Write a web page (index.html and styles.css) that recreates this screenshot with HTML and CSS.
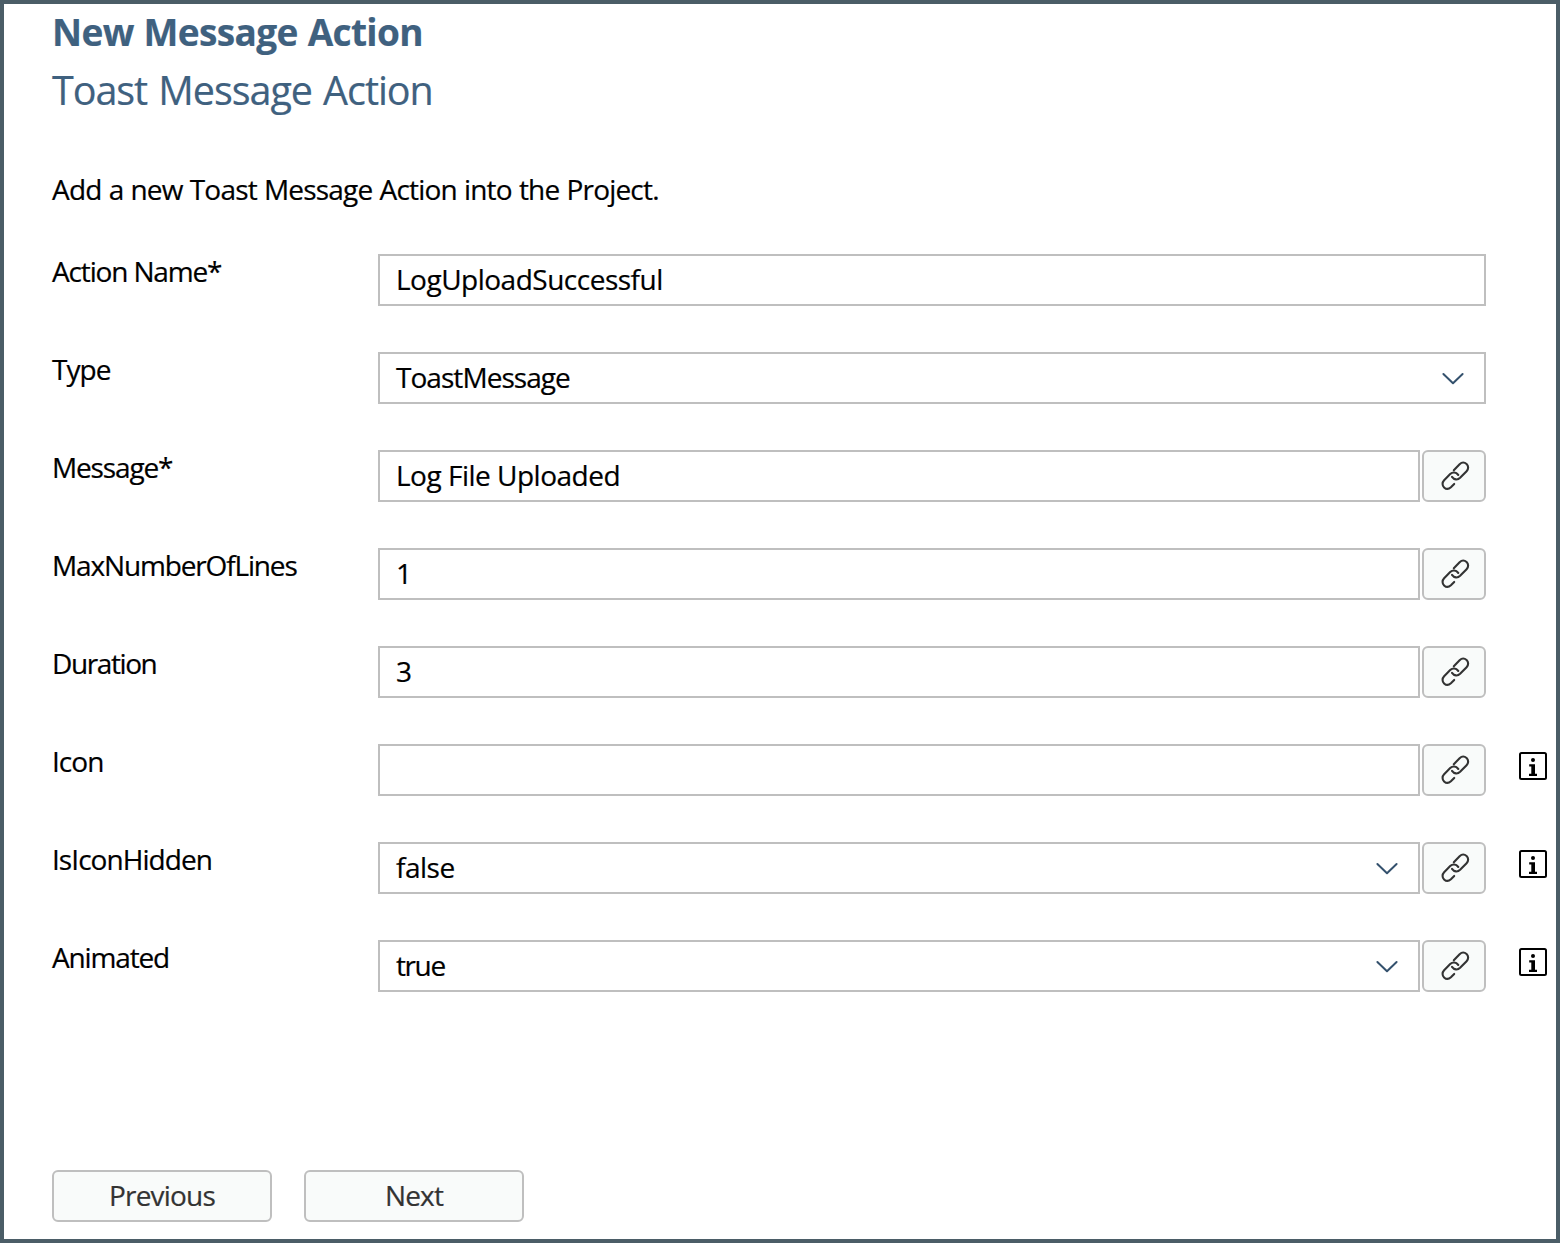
FILE: index.html
```html
<!DOCTYPE html>
<html lang="en">
<head>
<meta charset="utf-8">
<title>New Message Action</title>
<link rel="stylesheet" href="styles.css">
</head>
<body>
<svg class="symbols" aria-hidden="true">
  <symbol id="link" viewBox="0 0 40 40">
    <path d="M17.8 14.2 23.6 8.3C25.8 6.1 28.6 6.2 30.6 8.1C32.6 10 32.7 13 30.6 15.2L24.1 21.8C21.5 24.3 18.2 23.9 16 20.8M22.3 19C19.9 15.8 16.6 15.7 14.2 18.1L8.1 24.3C6 26.5 6.1 29.5 8.1 31.4C10.1 33.3 12.8 33.2 14.9 31.2L18.2 27.9"/>
  </symbol>
  <symbol id="chevron" viewBox="0 0 24 14">
    <path d="M2.4 2 12 11.3 21.6 2"/>
  </symbol>
  <symbol id="info" viewBox="0 0 28 28">
    <rect x="1" y="1" width="26" height="26" rx="1.5" fill="none" stroke="#000" stroke-width="2"/>
    <circle cx="14" cy="8" r="2"/>
    <path d="M10.2 12.2H16V21.8H18V24H10V21.8H12.3V14.4H10.2Z"/>
  </symbol>
</svg>
<main class="wizard">
  <h1 class="title">New Message Action</h1>
  <h2 class="subtitle">Toast Message Action</h2>
  <p class="intro">Add a new Toast Message Action into the Project.</p>
  <form class="form">
    <div class="row">
      <label class="label">Action Name*</label>
      <div class="control"><div class="field"><span class="loose">LogUploadSuccessful</span></div></div>
    </div>
    <div class="row">
      <label class="label snug">Type</label>
      <div class="control"><div class="field"><span class="snug">ToastMessage</span><svg class="chevron"><use href="#chevron"/></svg></div></div>
    </div>
    <div class="row">
      <label class="label">Message*</label>
      <div class="control"><div class="field"><span class="loose">Log File Uploaded</span></div><button class="bind" type="button"><svg class="link"><use href="#link"/></svg></button></div>
    </div>
    <div class="row">
      <label class="label">MaxNumberOfLines</label>
      <div class="control"><div class="field"><span>1</span></div><button class="bind" type="button"><svg class="link"><use href="#link"/></svg></button></div>
    </div>
    <div class="row">
      <label class="label tight">Duration</label>
      <div class="control"><div class="field"><span>3</span></div><button class="bind" type="button"><svg class="link"><use href="#link"/></svg></button></div>
    </div>
    <div class="row">
      <label class="label snug">Icon</label>
      <div class="control"><div class="field"></div><button class="bind" type="button"><svg class="link"><use href="#link"/></svg></button></div>
      <svg class="info"><use href="#info"/></svg>
    </div>
    <div class="row">
      <label class="label snug">IsIconHidden</label>
      <div class="control"><div class="field"><span class="loose">false</span><svg class="chevron"><use href="#chevron"/></svg></div><button class="bind" type="button"><svg class="link"><use href="#link"/></svg></button></div>
      <svg class="info"><use href="#info"/></svg>
    </div>
    <div class="row">
      <label class="label">Animated</label>
      <div class="control"><div class="field"><span class="tight">true</span><svg class="chevron"><use href="#chevron"/></svg></div><button class="bind" type="button"><svg class="link"><use href="#link"/></svg></button></div>
      <svg class="info"><use href="#info"/></svg>
    </div>
  </form>
  <footer class="actions">
    <button class="button" type="button">Previous</button>
    <button class="button" type="button">Next</button>
  </footer>
</main>
</body>
</html>
```
FILE: styles.css
```css
* { box-sizing: border-box; }
body {
  margin: 0;
  background: #fff;
  color: #000;
  font: 28px/34px "Open Sans", "Noto Sans", sans-serif;
  -webkit-text-stroke: 0.2px currentColor;
}
.symbols { display: none; }
.wizard {
  display: flex;
  flex-direction: column;
  height: 1243px;
  padding: 0 9px 17px 48px;
  border: 4px solid #4b5d67;
}
.title, .subtitle, .intro { margin: 0; white-space: nowrap; }
.title, .subtitle { color: #3f617f; }
.title { font-size: 37px; font-weight: 700; line-height: 56px; letter-spacing: -0.65px; word-spacing: 1px; }
.subtitle { font-size: 39.5px; font-weight: 400; line-height: 60px; letter-spacing: -1.05px; word-spacing: 2px; }
.intro { margin-top: 52px; letter-spacing: -0.8px; word-spacing: 0.6px; }
.form { display: flex; flex-direction: column; gap: 46px; margin-top: 48px; }
.row { display: grid; grid-template-columns: 326px 1108px 28px; height: 52px; }
.label { white-space: nowrap; letter-spacing: -1.15px; }
.control { display: flex; gap: 2px; }
.field {
  flex: 1;
  display: flex;
  align-items: center;
  justify-content: space-between;
  padding: 0 19px 0 16px;
  border: 2px solid #bfbfbf;
  background: #fff;
  line-height: 46px;
}
.field span { padding-bottom: 2px; }
.loose { letter-spacing: -0.5px; }
.snug { letter-spacing: -0.95px; }
.tight { letter-spacing: -1.4px; }
.chevron { width: 24px; height: 14px; margin-top: 2px; fill: none; stroke: #34516d; stroke-width: 2; stroke-linecap: round; stroke-linejoin: round; }
.bind, .button {
  display: flex;
  align-items: center;
  justify-content: center;
  padding: 0;
  border: 2px solid #bfbfbf;
  border-radius: 6px;
  background: #f9fbfa;
  color: #333;
  font: inherit;
}
.bind { width: 64px; padding-left: 3px; }
.link { flex: none; width: 40px; height: 40px; fill: none; stroke: #333; stroke-width: 2.1; stroke-linecap: round; }
.info { width: 28px; height: 28px; margin: 8px 0 0 33px; }
.actions { display: flex; gap: 32px; margin-top: auto; }
.button { width: 220px; height: 52px; padding-bottom: 2px; letter-spacing: -0.8px; }
```
